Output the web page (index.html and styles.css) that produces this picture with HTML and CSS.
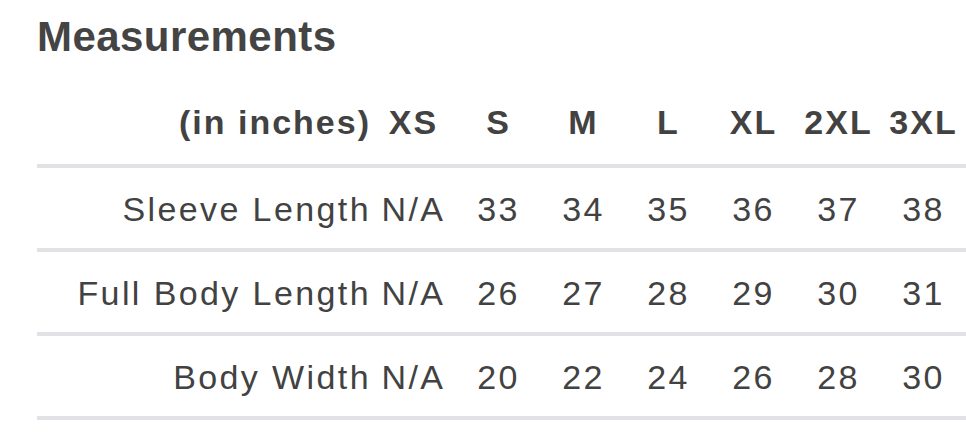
FILE: index.html
```html
<!DOCTYPE html>
<html lang="en">
<head>
<meta charset="utf-8">
<title>Measurements</title>
<link rel="stylesheet" href="styles.css">
</head>
<body>
<main class="page">
  <h1 class="title">Measurements</h1>
  <table class="sizes">
    <colgroup>
      <col class="col-label">
      <col class="col-size"><col class="col-size"><col class="col-size"><col class="col-size"><col class="col-size"><col class="col-size"><col class="col-size">
    </colgroup>
    <thead>
      <tr class="head-row">
        <th class="label">(in inches)</th>
        <th>XS</th><th>S</th><th>M</th><th>L</th><th>XL</th><th>2XL</th><th>3XL</th>
      </tr>
    </thead>
    <tbody>
      <tr>
        <td class="label">Sleeve Length</td>
        <td>N/A</td><td>33</td><td>34</td><td>35</td><td>36</td><td>37</td><td>38</td>
      </tr>
      <tr>
        <td class="label">Full Body Length</td>
        <td>N/A</td><td>26</td><td>27</td><td>28</td><td>29</td><td>30</td><td>31</td>
      </tr>
      <tr>
        <td class="label">Body Width</td>
        <td>N/A</td><td>20</td><td>22</td><td>24</td><td>26</td><td>28</td><td>30</td>
      </tr>
    </tbody>
  </table>
</main>
</body>
</html>
```

FILE: styles.css
```css
html, body {
  margin: 0;
  padding: 0;
  background: #ffffff;
}

.page {
  padding-left: 37px;
  color: #424242;
  font-family: "Liberation Sans", Arial, Helvetica, sans-serif;
}

.title {
  margin: 0;
  padding-top: 11px;
  font-size: 42px;
  line-height: 52px;
  font-weight: bold;
  letter-spacing: 0.45px;
  color: #444444;
}

.sizes {
  width: 929px;
  border-collapse: collapse;
  table-layout: fixed;
  margin-top: 33px;
}

.col-label { width: 334px; }
.col-size { width: 85px; }

.sizes th,
.sizes td {
  padding: 0;
  text-align: center;
  white-space: nowrap;
  font-size: 34px;
  letter-spacing: 2.4px;
}

.sizes th {
  font-weight: bold;
  letter-spacing: 2px;
  vertical-align: top;
  line-height: 42px;
  padding-top: 5px;
  padding-bottom: 21px;
}

.sizes td {
  vertical-align: top;
  font-weight: normal;
  line-height: 77px;
  padding-top: 3px;
}

.sizes .label {
  text-align: right;
  padding-right: 0;
}

.sizes tr {
  border-bottom: 4px solid #e2e2e6;
}
```
